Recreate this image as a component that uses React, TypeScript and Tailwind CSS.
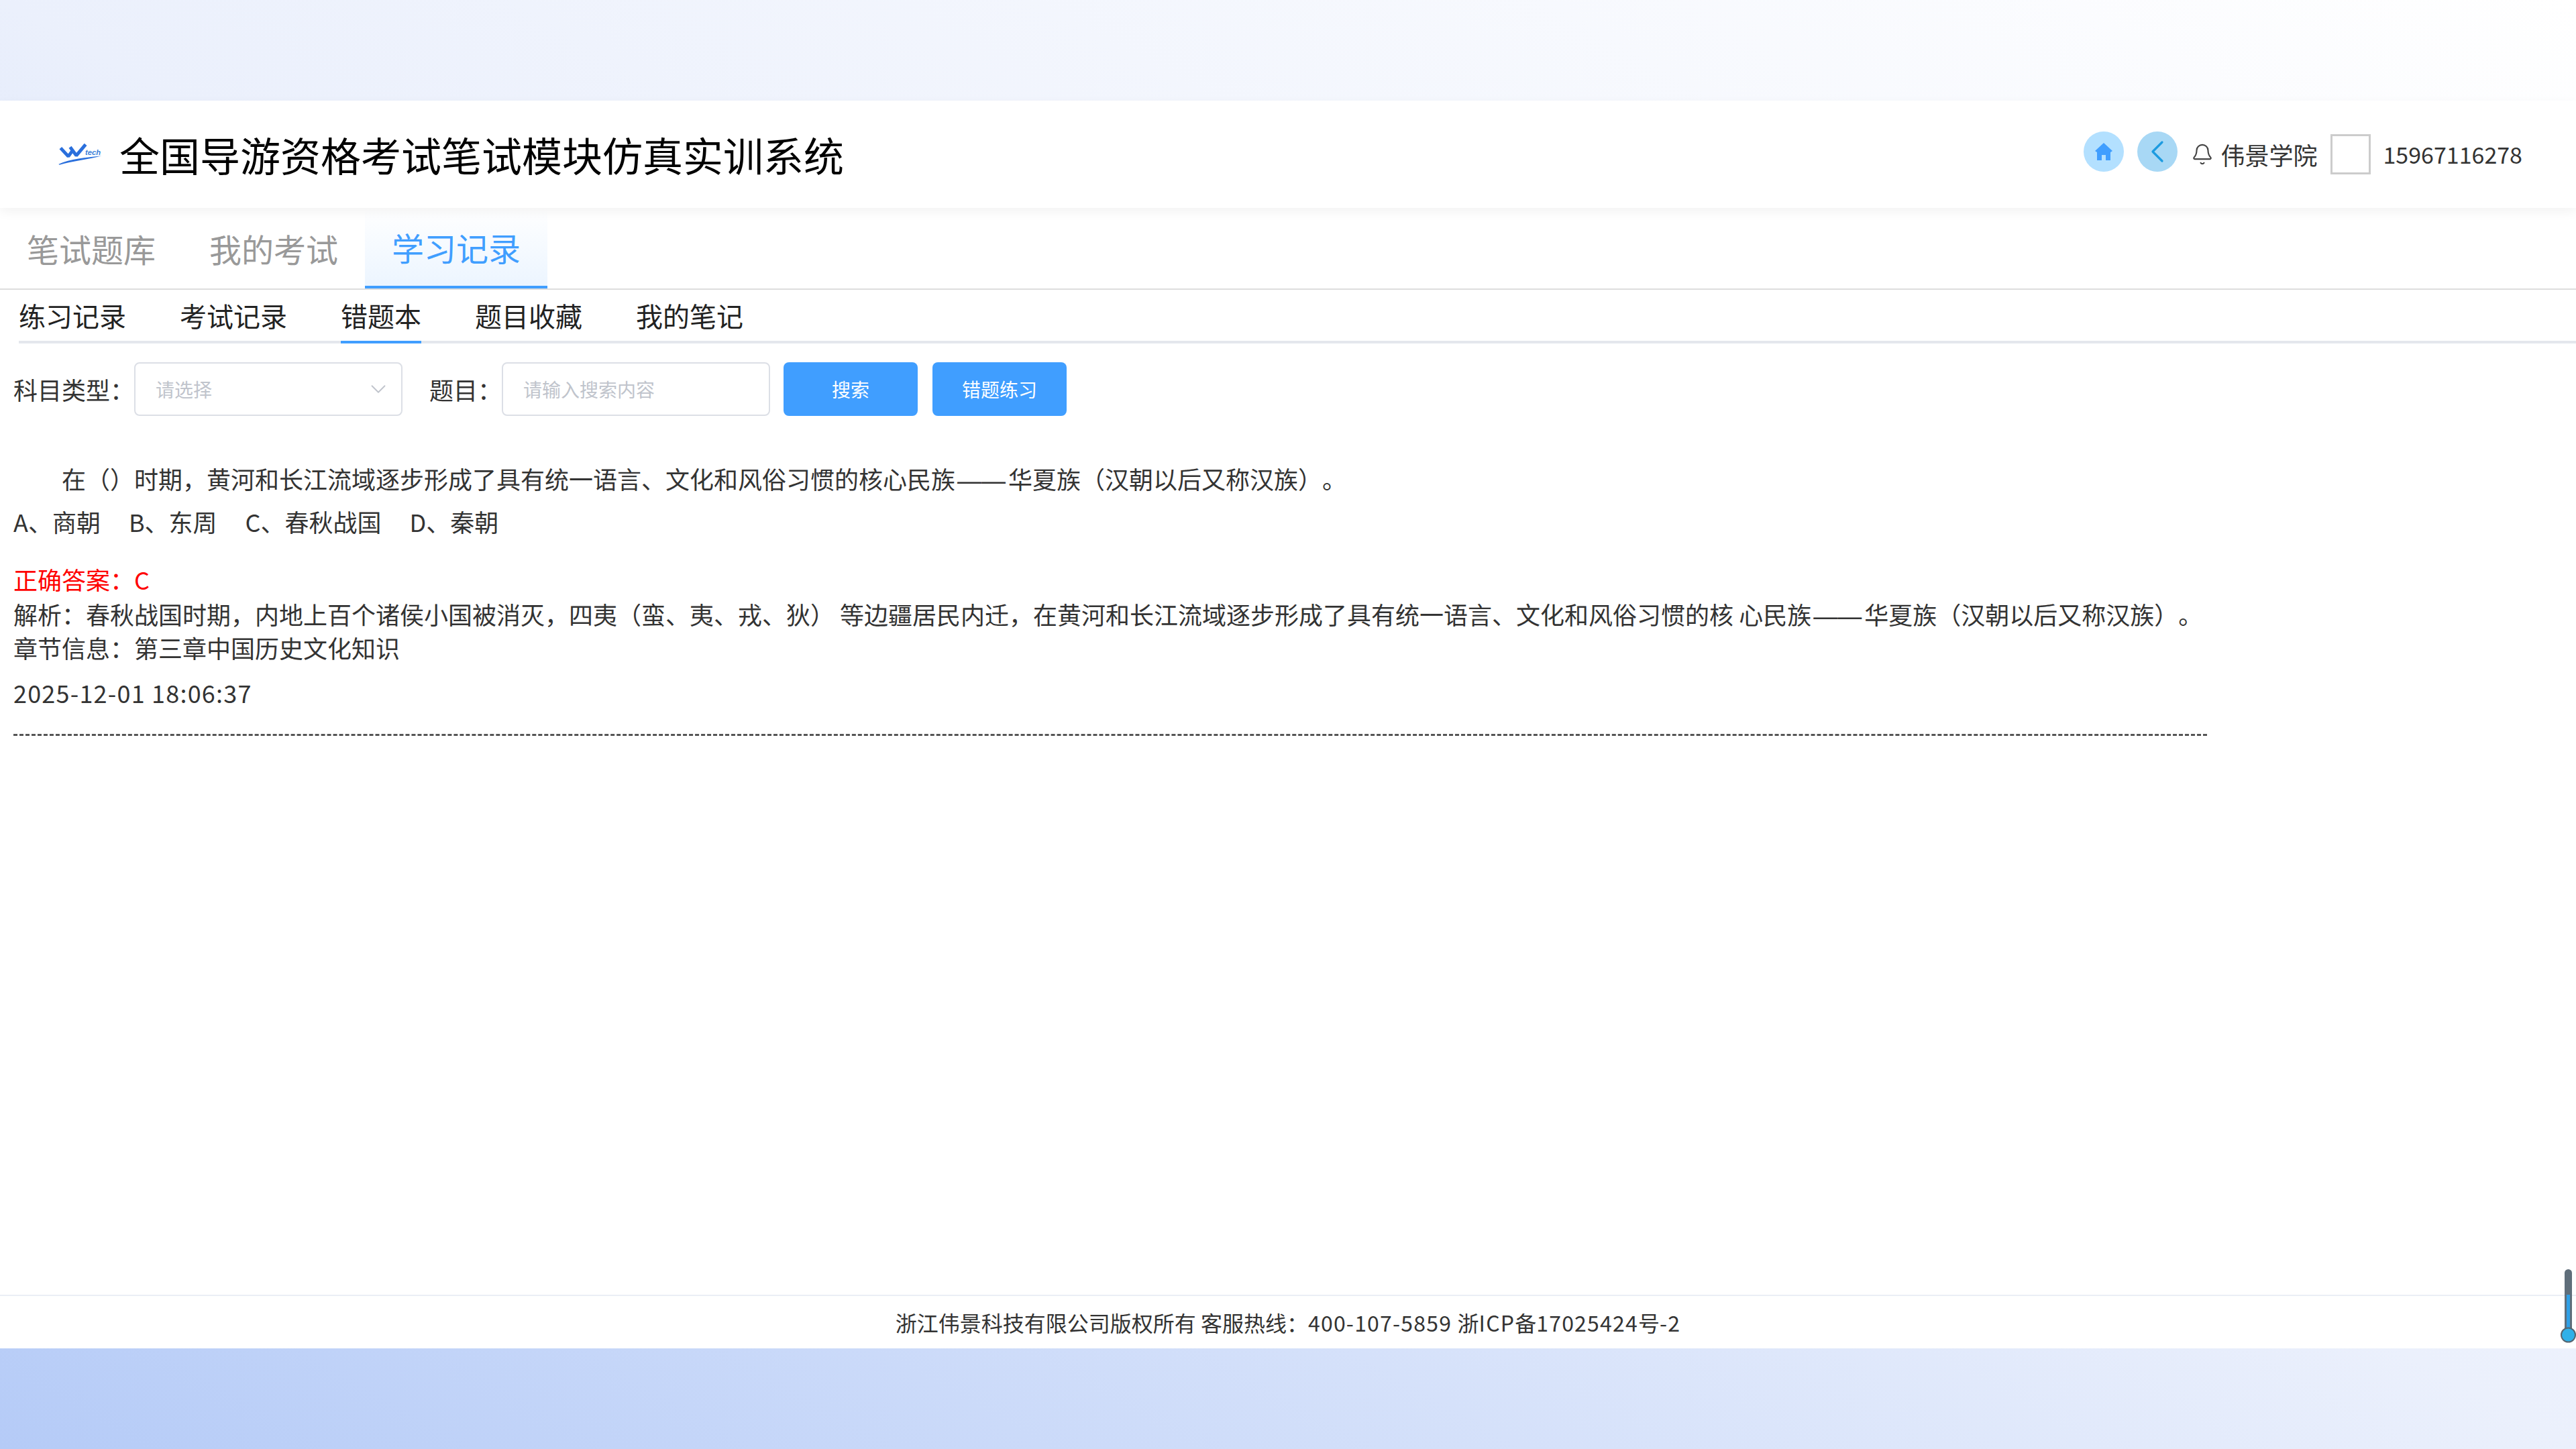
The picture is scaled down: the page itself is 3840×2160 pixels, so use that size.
import React from 'react';
import { Bell, ChevronDown, ChevronLeft } from 'lucide-react';

const mainTabs = ['笔试题库', '我的考试', '学习记录'];
const subTabs = ['练习记录', '考试记录', '错题本', '题目收藏', '我的笔记'];
const options = ['A、商朝', 'B、东周', 'C、春秋战国', 'D、秦朝'];

function Logo() {
  return (
    <svg width="70" height="33" viewBox="78 72 210 100" fill="none">
      <path d="M87 92 L122 130 L140 105" stroke="#2a6fdc" strokeWidth="15" strokeLinejoin="bevel" />
      <path d="M130 88 L158 126 L200 76" stroke="#2a6fdc" strokeWidth="15" strokeLinejoin="bevel" />
      <path d="M78 165 C130 140 200 135 272 127 C210 145 140 150 82 168 Z" fill="#2a6fdc" />
      <text x="198" y="124" fontSize="34" fontStyle="italic" fontWeight="700" fill="#3b7fd8" fontFamily="Liberation Sans, sans-serif">
        tech
      </text>
    </svg>
  );
}

function Thermometer() {
  return (
    <svg width="28" height="112" viewBox="0 0 28 112" className="absolute right-0 top-[1890px]">
      <rect x="11" y="2" width="11" height="96" rx="5.5" fill="#5f6e7a" />
      <rect x="14" y="40" width="5" height="60" fill="#2f9fe6" />
      <circle cx="16.5" cy="100" r="10.5" fill="#2fb0e8" stroke="#55646f" strokeWidth="2" />
    </svg>
  );
}

function Dash() {
  return <span className="ml-[3px] mr-[4px] font-['Liberation_Sans',sans-serif] leading-none">——</span>;
}

export default function App() {
  return (
    <div className="relative flex h-screen w-full flex-col overflow-hidden bg-[linear-gradient(to_top_right,#b5cbf7,#ebf0fc_50%,#ffffff)] py-[150px] font-['Noto_Sans_CJK_SC',sans-serif] text-[36px] text-[#333] [text-spacing-trim:space-all]">
      <div className="flex flex-1 flex-col bg-white">
        <header className="relative z-10 flex h-[160px] items-center justify-between bg-white pl-[87px] pr-[80px] shadow-[0_6px_16px_rgba(0,0,0,0.05)]">
          <div className="flex items-center gap-[21px]">
            <Logo />
            <h1 className="text-[60px] leading-none text-black">全国导游资格考试笔试模块仿真实训系统</h1>
          </div>
          <div className="flex items-center">
            <div className="mt-[-8px] flex h-[60px] w-[60px] items-center justify-center rounded-full bg-[#b3e0ff]">
              <svg width="28" height="28" viewBox="0 0 28 28" fill="#409eff">
                <path d="M14 1 L27 13 L24 15 V27 H17 V19 H11 V27 H4 V15 L1 13 Z" />
              </svg>
            </div>
            <div className="ml-[20px] mt-[-8px] flex h-[60px] w-[60px] items-center justify-center rounded-full bg-[#a8d8f5]">
              <ChevronLeft className="h-[56px] w-[56px] text-[#1c9be0]" strokeWidth={1.4} />
            </div>
            <Bell className="ml-[20px] h-[34px] w-[34px] text-[#444]" strokeWidth={1.5} />
            <span className="ml-[10px] leading-none">伟景学院</span>
            <div className="ml-[20px] h-[60px] w-[60px] border-[3px] border-[#ccc]" />
            <span className="ml-[18px] text-[34px] leading-none">15967116278</span>
          </div>
        </header>

        <nav className="flex h-[122px] border-b-2 border-[#ddd]">
          {mainTabs.map((tab, i) => (
            <div
              key={tab}
              className={
                i === 2
                  ? 'flex h-[120px] items-center border-b-4 border-[#409eff] bg-gradient-to-b from-white to-[#ecf5ff] px-[40px] text-[48px] text-[#409eff]'
                  : 'flex h-[120px] items-center px-[40px] text-[48px] text-[#999]'
              }
            >
              {tab}
            </div>
          ))}
        </nav>

        <div className="ml-[28px] flex h-[80px] gap-[80px] border-b-4 border-[#e4e7ed]">
          {subTabs.map((tab, i) => (
            <div
              key={tab}
              className={
                i === 2
                  ? 'mb-[-4px] flex items-center border-b-4 border-[#409eff] text-[40px] text-[#222]'
                  : 'mb-[-4px] flex items-center border-b-4 border-transparent text-[40px] text-[#222]'
              }
            >
              {tab}
            </div>
          ))}
        </div>

        <main className="flex-1 px-[20px] pt-[28px]">
          <div className="flex h-[80px] items-center">
            <span className="w-[180px]">科目类型：</span>
            <div className="flex h-[80px] w-[400px] items-center justify-between rounded-[8px] border-2 border-[#dcdfe6] pl-[30px] pr-[15px] text-[28px] text-[#c0c4cc]">
              <span>请选择</span>
              <ChevronDown className="h-[38px] w-[38px]" strokeWidth={1.2} />
            </div>
            <span className="ml-[40px] w-[108px]">题目：</span>
            <div className="flex h-[80px] w-[400px] items-center rounded-[8px] border-2 border-[#dcdfe6] pl-[30px] text-[28px] text-[#c0c4cc]">
              请输入搜索内容
            </div>
            <button className="ml-[20px] h-[80px] w-[200px] rounded-[8px] bg-[#409eff] text-[28px] text-white">搜索</button>
            <button className="ml-[22px] h-[80px] w-[200px] rounded-[8px] bg-[#409eff] text-[28px] text-white">错题练习</button>
          </div>

          <div className="mt-[61px] w-[3270px]">
            <p className="indent-[72px] leading-[64px]">
              在（）时期，黄河和长江流域逐步形成了具有统一语言、文化和风俗习惯的核心民族<Dash />华夏族（汉朝以后又称汉族）。
            </p>
            <div className="flex gap-[42px] leading-[64px]">
              {options.map((option) => (
                <span key={option}>{option}</span>
              ))}
            </div>
            <p className="mt-[29px] leading-[50px] text-[#f00]">正确答案：C</p>
            <p className="mt-[2px] leading-[50px]">
              解析：春秋战国时期，内地上百个诸侯小国被消灭，四夷（蛮、夷、戎、狄） 等边疆居民内迁，在黄河和长江流域逐步形成了具有统一语言、文化和风俗习惯的核 心民族<Dash />华夏族（汉朝以后又称汉族）。
            </p>
            <p className="leading-[50px]">章节信息：第三章中国历史文化知识</p>
            <p className="mt-[12px] leading-[60px] tracking-[1.2px]">2025-12-01 18:06:37</p>
            <div className="mt-[32px] border-t-[3px] border-dashed border-[#555]" />
          </div>
        </main>

        <footer className="flex h-[80px] items-center justify-center whitespace-pre border-t-2 border-[#ebeef5] text-[32px]">
          浙江伟景科技有限公司版权所有 客服热线：<span className="tracking-[1.2px]">400-107-5859 </span>浙<span className="tracking-[1.2px]">ICP</span>备<span className="tracking-[1.2px]">17025424</span>号<span className="tracking-[1.2px]">-2</span>
        </footer>
      </div>
      <Thermometer />
    </div>
  );
}
